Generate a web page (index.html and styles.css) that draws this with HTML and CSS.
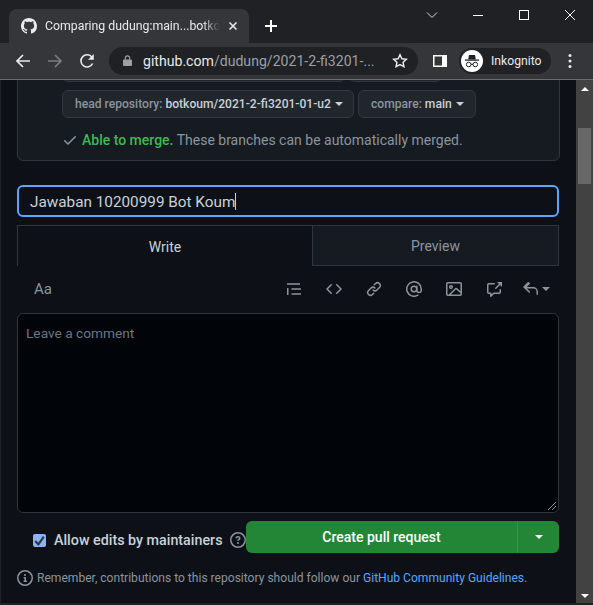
FILE: index.html
```html
<!DOCTYPE html>
<html lang="en">
<head>
<meta charset="utf-8">
<title>Comparing dudung:main...botkoum</title>
<link rel="stylesheet" href="styles.css">
</head>
<body>
<div class="window">
  <header class="tabstrip">
    <div class="tab">
      <svg class="tab-logo" viewBox="0 0 16 16"><path fill="#e8eaed" d="M8 0C3.58 0 0 3.58 0 8c0 3.54 2.29 6.53 5.47 7.59.4.07.55-.17.55-.38 0-.19-.01-.82-.01-1.49-2.01.37-2.53-.49-2.69-.94-.09-.23-.48-.94-.82-1.13-.28-.15-.68-.52-.01-.53.63-.01 1.08.58 1.23.82.72 1.21 1.87.87 2.33.66.07-.52.28-.87.51-1.07-1.78-.2-3.64-.89-3.64-3.95 0-.87.31-1.59.82-2.15-.08-.2-.36-1.02.08-2.12 0 0 .67-.21 2.2.82.64-.18 1.32-.27 2-.27.68 0 1.36.09 2 .27 1.53-1.04 2.2-.82 2.2-.82.44 1.1.16 1.92.08 2.12.51.56.82 1.27.82 2.15 0 3.07-1.87 3.75-3.65 3.95.29.25.54.73.54 1.48 0 1.07-.01 1.93-.01 2.2 0 .21.15.46.55.38A8.013 8.013 0 0016 8c0-4.42-3.58-8-8-8z"/></svg>
      <span class="tab-title">Comparing dudung:main...botkoum</span>
      <svg class="tab-close" viewBox="0 0 10 10"><path d="M1.5 1.5l7 7M8.5 1.5l-7 7" stroke="#e8eaed" stroke-width="1.6" fill="none"/></svg>
    </div>
    <svg class="newtab" viewBox="0 0 12 12"><path d="M6 0v12M0 6h12" stroke="#fff" stroke-width="2" fill="none"/></svg>
    <div class="winctl">
      <svg class="ctl" viewBox="0 0 46 20"><path d="M18 7.500l5 5 5-5" stroke="#d8d8d8" fill="none"/></svg>
      <svg class="ctl" viewBox="0 0 46 20"><path d="M18 10.500h10" stroke="#fff" fill="none"/></svg>
      <svg class="ctl" viewBox="0 0 46 20"><rect x="18.500" y="5.500" width="9" height="9" stroke="#fff" fill="none"/></svg>
      <svg class="ctl" viewBox="0 0 46 20"><path d="M18 5l10 10M28 5L18 15" stroke="#fff" fill="none"/></svg>
    </div>
  </header>
  <nav class="toolbar">
    <svg class="nav-icon" viewBox="0 0 16 16"><path d="M15 8H2M8 2L2 8l6 6" stroke="#e8eaed" stroke-width="1.7" fill="none"/></svg>
    <svg class="nav-icon" viewBox="0 0 16 16"><path d="M1 8h13M8 2l6 6-6 6" stroke="#7b7d80" stroke-width="1.7" fill="none"/></svg>
    <svg class="nav-icon" viewBox="0 0 16 16"><path d="M13.600 10.500A6.100 6.100 0 1 1 13 4.300" stroke="#e8eaed" stroke-width="1.600" fill="none"/><path d="M14.800 1v5.800H9z" fill="#e8eaed"/></svg>
    <div class="omnibox">
      <svg class="lock" viewBox="0 0 10 12"><path fill="#9aa0a6" d="M1 5h8a1 1 0 0 1 1 1v5a1 1 0 0 1-1 1H1a1 1 0 0 1-1-1V6a1 1 0 0 1 1-1zM2 5V3.300a3 3 0 0 1 6 0V5H6.800V3.300a1.800 1.800 0 0 0-3.600 0V5z"/></svg>
      <span class="url"><b>github.com</b>/dudung/2021-2-fi3201-...</span>
      <svg class="star" viewBox="0 0 16 16"><path d="M8 1.800l1.900 4 4.400.5-3.200 3 .8 4.400L8 11.600l-3.900 2.100.8-4.400-3.200-3 4.400-.5z" stroke="#e8eaed" stroke-width="1.500" fill="none"/></svg>
    </div>
    <svg class="panel" viewBox="0 0 14 12"><path fill="#fff" fill-rule="evenodd" d="M0 0h14v12H0zM1.500 1.500v9H9v-9z"/></svg>
    <div class="profile">
      <svg class="avatar" viewBox="0 0 22 22"><circle cx="11" cy="11" r="11" fill="#fff"/><path fill="#202124" d="M8 5h6l.8 4.300H7.200zM4 9.500h14v1.200H4z"/><circle cx="7.700" cy="14.500" r="2.300" fill="none" stroke="#202124"/><circle cx="14.300" cy="14.500" r="2.300" fill="none" stroke="#202124"/><path d="M10 14.300h2" stroke="#202124"/></svg>
      <span>Inkognito</span>
    </div>
    <svg class="dots" viewBox="0 0 4 16"><circle cx="2" cy="2.500" r="1.500" fill="#e8eaed"/><circle cx="2" cy="8" r="1.500" fill="#e8eaed"/><circle cx="2" cy="13.500" r="1.500" fill="#e8eaed"/></svg>
  </nav>
  <div class="viewport">
    <main class="page">
      <section class="compare-card">
        <div class="ref-row">
          <span class="ref ref-base"></span>
          <span class="ref ref-small"></span>
        </div>
        <div class="ref-row">
          <span class="ref ref-head"><span><span class="ref-label">head repository:</span> <b>botkoum/2021-2-fi3201-01-u2</b></span><i class="caret"></i></span>
          <span class="ref ref-compare"><span><span class="ref-label">compare:</span> <b>main</b></span><i class="caret"></i></span>
        </div>
        <p class="merge">
          <svg class="icon check" viewBox="0 0 16 16"><path d="M13.780 4.220a.75.75 0 010 1.060l-7.250 7.250a.75.75 0 01-1.060 0L2.220 9.280a.75.75 0 011.060-1.060L6 10.940l6.720-6.720a.75.75 0 011.060 0z"/></svg>
          <span><strong>Able to merge.</strong> These branches can be automatically merged.</span>
        </p>
      </section>
      <div class="title-input"><span>Jawaban 10200999 Bot Koum</span><i class="text-caret"></i></div>
      <div class="tabs">
        <div class="pane-tab active">Write</div>
        <div class="pane-tab">Preview</div>
      </div>
      <div class="md-toolbar">
        <span class="aa">Aa</span>
        <div class="md-icons">
          <svg class="icon" viewBox="0 0 16 16"><path d="M1 3h13M1.750 7v7M5.500 8H15M5.500 13H15" stroke="#8b949e" stroke-width="1.500" fill="none"/></svg>
          <svg class="icon" viewBox="0 0 16 16"><path d="M4.720 3.220a.75.75 0 011.060 1.060L2.060 8l3.720 3.720a.75.75 0 11-1.060 1.060L.470 8.530a.75.75 0 010-1.060l4.250-4.250zm6.560 0a.75.75 0 10-1.060 1.060L13.940 8l-3.720 3.720a.75.75 0 101.060 1.060l4.250-4.250a.75.75 0 000-1.060l-4.250-4.250z"/></svg>
          <svg class="icon" viewBox="0 0 16 16"><path d="M7.775 3.275a.75.75 0 001.060 1.060l1.250-1.250a2 2 0 112.830 2.830l-2.500 2.500a2 2 0 01-2.830 0 .75.75 0 00-1.060 1.060 3.500 3.500 0 004.950 0l2.500-2.500a3.500 3.500 0 00-4.950-4.950l-1.250 1.250zm-4.690 9.640a2 2 0 010-2.830l2.500-2.500a2 2 0 012.830 0 .75.75 0 001.060-1.060 3.500 3.500 0 00-4.950 0l-2.500 2.500a3.500 3.500 0 004.950 4.950l1.250-1.250a.75.75 0 00-1.060-1.060l-1.250 1.250a2 2 0 01-2.830 0z"/></svg>
          <svg class="icon" viewBox="0 0 16 16"><circle cx="8" cy="8" r="2.750" fill="none" stroke="#8b949e" stroke-width="1.500"/><path d="M10.750 5.250V9.250a2 2 0 0 0 4.500 0V8A7.250 7.250 0 1 0 11.800 14.200" fill="none" stroke="#8b949e" stroke-width="1.500" stroke-linecap="round"/></svg>
          <svg class="icon" viewBox="0 0 16 16"><path fill-rule="evenodd" d="M1.750 2.500a.25.25 0 00-.25.25v10.500c0 .138.112.25.25.25h.94a.76.76 0 01.030-.030l6.077-6.078a1.750 1.750 0 012.412-.060L14.500 10.310V2.750a.25.25 0 00-.25-.25H1.750zm12.500 11H4.810l5.048-5.047a.25.25 0 01.344-.009l4.298 3.889v.917a.25.25 0 01-.25.25zm1.750-.25V2.750A1.750 1.750 0 0014.250 1H1.750A1.750 1.750 0 000 2.750v10.500C0 14.216.784 15 1.750 15h12.500A1.750 1.750 0 0016 13.250zM5.500 6a.5.5 0 11-1 0 .5.5 0 011 0zM7 6a2 2 0 11-4 0 2 2 0 014 0z"/></svg>
          <svg class="icon" viewBox="0 0 16 16"><path d="M8.250 2.750h-5.500a1 1 0 0 0-1 1v7.500a1 1 0 0 0 1 1h2v3l3-3h5.500a1 1 0 0 0 1-1v-2.500M9.750 7.250l4.750-4.750" fill="none" stroke="#8b949e" stroke-width="1.500" stroke-linecap="round" stroke-linejoin="round"/><path d="M11 1h5v5z"/></svg>
          <span class="reply">
            <svg class="icon" viewBox="0 0 16 16"><path d="M6.780 1.970a.75.75 0 010 1.060L3.810 6h6.440A4.750 4.750 0 0115 10.750v2.500a.75.75 0 01-1.500 0v-2.500a3.250 3.250 0 00-3.250-3.250H3.810l2.970 2.970a.75.75 0 11-1.060 1.060L.470 6.530a.75.75 0 010-1.060l4.250-4.250a.75.75 0 011.060 0z"/></svg>
            <i class="caret caret-muted"></i>
          </span>
        </div>
      </div>
      <div class="comment">
        <span class="placeholder">Leave a comment</span>
        <svg class="grip" viewBox="0 0 8 8"><path d="M0 8l8-8M4 8l4-4" stroke="#8b949e" fill="none"/></svg>
      </div>
      <div class="actions">
        <label class="allow">
          <span class="checkbox"><svg viewBox="0 0 12 12"><path d="M2 6.500l3 3 5-7" stroke="#30363d" stroke-width="2" fill="none"/></svg></span>
          <span class="allow-text">Allow edits by maintainers</span>
          <svg class="icon help" viewBox="0 0 16 16"><path fill-rule="evenodd" d="M8 1.500a6.500 6.500 0 100 13 6.500 6.500 0 000-13zM0 8a8 8 0 1116 0A8 8 0 010 8zm9 3a1 1 0 11-2 0 1 1 0 012 0zM6.920 6.085c.081-.16.19-.299.34-.398.145-.097.371-.187.74-.187.28 0 .553.087.738.225A.613.613 0 019 6.250c0 .177-.04.264-.077.318a.956.956 0 01-.277.245c-.076.051-.158.1-.258.161l-.007.004a7.728 7.728 0 00-.313.195 2.416 2.416 0 00-.692.661.75.75 0 001.248.832.956.956 0 01.276-.245 6.300 6.300 0 01.26-.16l.006-.004c.093-.057.204-.123.313-.195.222-.149.487-.355.692-.662.214-.32.329-.702.329-1.150 0-.76-.36-1.348-.863-1.725A2.760 2.760 0 008 4c-.631 0-1.155.16-1.572.438-.413.276-.68.638-.849.977a.75.75 0 101.342.67z"/></svg>
        </label>
        <div class="create">
          <span class="create-main">Create pull request</span>
          <span class="create-menu"><i class="caret caret-white"></i></span>
        </div>
      </div>
      <p class="note">
        <svg class="icon info" viewBox="0 0 16 16"><path fill-rule="evenodd" d="M8 1.500a6.500 6.500 0 100 13 6.500 6.500 0 000-13zM0 8a8 8 0 1116 0A8 8 0 010 8zm6.500-.25A.75.75 0 017.250 7h1a.75.75 0 01.75.75v2.750h.25a.75.75 0 010 1.500h-2a.75.75 0 010-1.500h.25v-2h-.25a.75.75 0 01-.75-.75zM8 6a1 1 0 100-2 1 1 0 000 2z"/></svg>
        <span>Remember, contributions to this repository should follow our <a href="#">GitHub Community Guidelines</a>.</span>
      </p>
    </main>
    <aside class="scrollbar">
      <i class="arrow-up"></i>
      <div class="thumb-track"><div class="thumb"></div></div>
      <i class="arrow-down"></i>
    </aside>
  </div>
</div>
</body>
</html>
```
FILE: styles.css
```css
* { box-sizing: border-box; }
html, body { margin: 0; height: 100%; background: #202124; overflow: hidden; }
body { font-family: Roboto, "Noto Sans", sans-serif; color: #c9d1d9; }
.window { width: 593px; height: 605px; display: flex; flex-direction: column; overflow: hidden; }

.tabstrip { height: 43px; flex: none; background: #202124; display: flex; align-items: flex-start; padding: 9px 0 0 9px; }
.tab { width: 240px; height: 34px; background: #35363a; border-radius: 8px 8px 0 0; display: flex; align-items: center; padding: 0 11px 0 12px; gap: 8px; }
.tab-logo { width: 16px; height: 16px; flex: none; }
.tab-title { flex: 1; min-width: 0; overflow: hidden; white-space: nowrap; font-size: 12.300px; color: #e8eaed; -webkit-mask-image: linear-gradient(90deg, #000 90%, transparent); mask-image: linear-gradient(90deg, #000 90%, transparent); }
.tab-close { width: 10px; height: 10px; flex: none; }
.newtab { width: 12px; height: 12px; flex: none; margin: 11px 0 0 16px; }
.winctl { margin-left: auto; display: flex; }
.ctl { width: 46px; height: 30px; display: block; margin-top: -9px; }

.toolbar { height: 37px; flex: none; background: #35363a; border-bottom: 1px solid #6b6c70; display: flex; align-items: center; padding: 0 0 1px 15px; }
.nav-icon { width: 16px; height: 16px; flex: none; margin-right: 16px; }
.omnibox { width: 309px; height: 28px; margin-left: -2px; background: #202124; border-radius: 14px; display: flex; align-items: center; padding: 0 10px 0 14px; }
.lock { width: 9px; height: 11px; flex: none; }
.url { margin-left: 11px; flex: 1; font-size: 14.100px; color: #9aa0a6; white-space: nowrap; overflow: hidden; }
.url b { font-weight: 400; color: #e8eaed; }
.star { width: 16px; height: 16px; flex: none; }
.panel { width: 14px; height: 12px; margin-left: 15px; flex: none; }
.profile { width: 92px; height: 26px; margin-left: 12px; background: #202124; border-radius: 13px; display: flex; align-items: center; padding-left: 2px; font-size: 12.200px; color: #e8eaed; gap: 8px; }
.avatar { width: 22px; height: 22px; flex: none; }
.dots { width: 4px; height: 16px; margin-left: 17px; flex: none; }

.viewport { flex: 1; min-height: 0; display: flex; border-left: 1px solid #202124; border-bottom: 2px solid #202124; }
.page { flex: 1; min-width: 0; background: #0d1117; padding: 0 16px; overflow: hidden; }
.compare-card { margin-top: -40px; height: 121px; background: #161b22; border: 1px solid #30363d; border-radius: 6px; padding: 13px 0 0 44px; }
.ref-row { display: flex; gap: 4px; height: 28px; margin-bottom: 8px; }
.ref { height: 28px; border: 1px solid #30363d; border-radius: 6px; background: #21262d; font-size: 12.100px; padding: 0 12px; display: inline-flex; align-items: center; white-space: pre; color: #c9d1d9; }
.ref-base { width: 283px; }
.ref-small { width: 93px; }
.ref-head { width: 292px; }
.ref-compare { width: 118px; }
.ref-label { color: #8b949e; font-weight: 500; }
.ref b { font-weight: 500; }
.caret { display: inline-block; width: 0; height: 0; border: 4px solid transparent; border-top-color: #c9d1d9; border-bottom: 0; margin-left: 4px; }
.caret-muted { border-top-color: #8b949e; margin-left: 3px; }
.caret-white { border-top-color: #fff; margin: 0; }
.merge { margin: 12px 0 0; font-size: 14px; line-height: 20px; color: #8b949e; display: flex; align-items: center; white-space: pre; }
.merge strong { color: #3fb950; font-weight: 500; }
.check { fill: #3fb950; width: 16px; height: 16px; margin-right: 4px; }

.title-input { margin-top: 24px; height: 32px; width: 542px; border: 2px solid #58a6ff; border-radius: 6px; display: flex; align-items: center; padding: 1px 11px 0; font-size: 15.300px; color: #c9d1d9; }
.text-caret { width: 1px; height: 17px; background: #c9d1d9; }
.tabs { margin-top: 8px; width: 542px; height: 41px; display: flex; border-top: 1px solid #30363d; }
.pane-tab { display: flex; align-items: center; justify-content: center; font-size: 14px; }
.pane-tab.active { width: 295px; border-left: 1px solid #30363d; color: #c9d1d9; padding-top: 2px; }
.pane-tab:not(.active) { flex: 1; background: #161b22; border: 1px solid #30363d; border-top: 0; color: #8b949e; }

.md-toolbar { width: 542px; height: 47px; display: flex; align-items: center; justify-content: space-between; padding: 0 8px 1px 17px; }
.aa { font-size: 15px; color: #8b949e; }
.md-icons { display: flex; align-items: center; gap: 24px; margin-right: 1px; }
.icon { width: 16px; height: 16px; fill: #8b949e; flex: none; display: block; }
.reply { display: flex; align-items: center; margin-left: -3px; }

.comment { width: 542px; height: 200px; background: #010409; border: 1px solid #30363d; border-radius: 6px; padding: 9px 8px; font-size: 13.700px; line-height: 20px; color: #6e7681; position: relative; }
.grip { width: 8px; height: 8px; position: absolute; right: 2px; bottom: 2px; }

.actions { width: 542px; height: 32px; margin-top: 8px; display: flex; align-items: center; justify-content: space-between; padding-left: 16px; }
.allow { display: flex; align-items: center; font-size: 14.300px; font-weight: 500; color: #c9d1d9; white-space: nowrap; padding-top: 6px; }
.allow-text { white-space: nowrap; }
.checkbox { width: 13px; height: 13px; background: #8ab4f8; border-radius: 2px; display: block; margin-right: 8px; }
.checkbox svg { display: block; width: 13px; height: 13px; }
.help { margin-left: 7px; }
.create { width: 313px; flex: none; height: 32px; background: #238636; border-radius: 6px; display: flex; color: #fff; font-size: 14px; font-weight: 500; }
.create-main { flex: 1; display: flex; align-items: center; justify-content: center; }
.create-menu { width: 42px; border-left: 1px solid #2f9a46; display: flex; align-items: center; justify-content: center; }

.note { margin: 16px 0 0; display: flex; align-items: center; gap: 4px; font-size: 12.070px; line-height: 18px; color: #8b949e; white-space: nowrap; }
.note a { color: #58a6ff; text-decoration: none; }
.info { width: 16px; height: 16px; }

.scrollbar { width: 17px; flex: none; background: #424242; display: flex; flex-direction: column; align-items: center; padding: 7px 0 5px; }
.arrow-up { width: 0; height: 0; border: 4px solid transparent; border-bottom: 4px solid #fff; border-top: 0; }
.arrow-down { width: 0; height: 0; border: 4px solid transparent; border-top: 4px solid #fff; border-bottom: 0; }
.thumb-track { flex: 1; width: 100%; padding: 37px 2px 0; }
.thumb { height: 56px; background: #686868; }
```
